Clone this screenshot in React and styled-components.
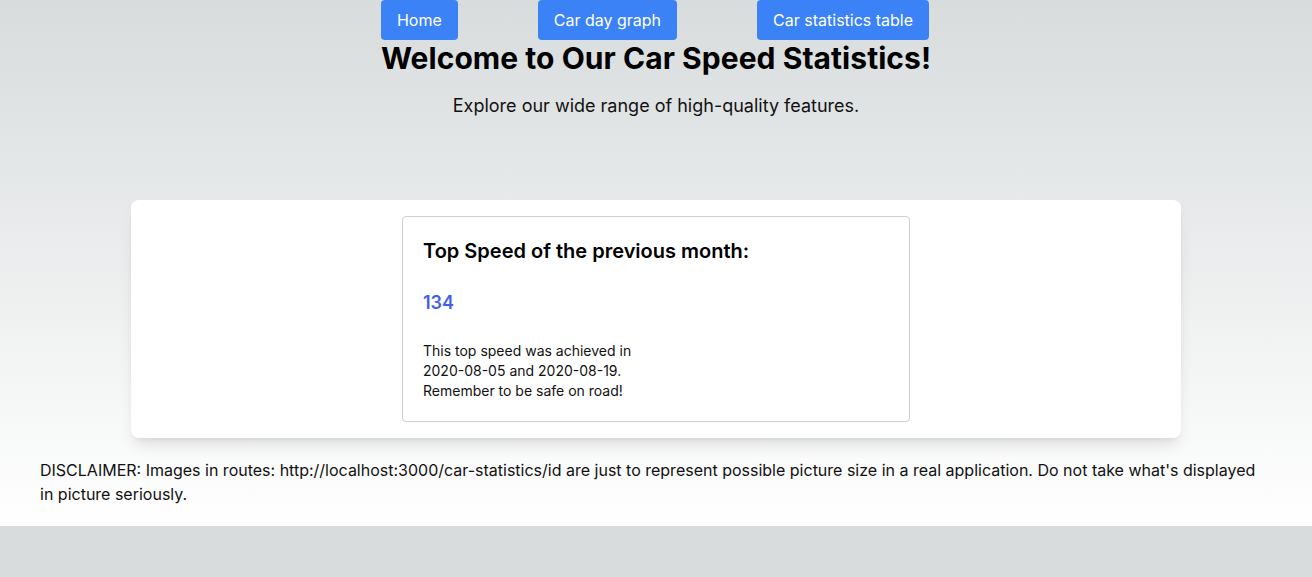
import React from "react";
import styled, { createGlobalStyle } from "styled-components";

const GlobalStyle = createGlobalStyle`
  html, body {
    margin: 0;
    padding: 0;
    background: #d8dcdd;
    font-family: Inter, "Noto Sans", sans-serif;
    color: #111;
  }
  * { box-sizing: border-box; }
`;

const Page = styled.div`
  background: linear-gradient(to bottom, #d8dcdd 0%, #ffffff 100%);
  padding-bottom: 20px;
`;

const Nav = styled.nav`
  display: flex;
  justify-content: center;
  gap: 80px;
  padding-right: 2px;
`;

const NavButton = styled.button`
  background: #3b82f6;
  color: #fff;
  border: none;
  border-radius: 4px;
  padding: 0 16px;
  height: 40px;
  font-family: inherit;
  font-size: 16px;
  line-height: 24px;
  cursor: pointer;
`;

const Hero = styled.header`
  text-align: center;
`;

const Title = styled.h1`
  margin: 0;
  font-size: 30px;
  line-height: 36px;
  font-weight: 700;
  letter-spacing: 0.05px;
  color: #000;
`;

const Subtitle = styled.p`
  margin: 16px 0 0;
  font-size: 18px;
  line-height: 28px;
  color: #111;
`;

const Panel = styled.section`
  margin: 80px 131px 0;
  background: #fff;
  border-radius: 8px;
  padding: 16px 0;
  display: flex;
  justify-content: center;
  box-shadow: 0 10px 15px -3px rgba(0, 0, 0, 0.1), 0 4px 6px -4px rgba(0, 0, 0, 0.1);
`;

const StatCard = styled.div`
  width: 508px;
  border: 1px solid #cfcfcf;
  border-radius: 4px;
  padding: 20px;
`;

const StatTitle = styled.h2`
  margin: 0;
  font-size: 20px;
  line-height: 28px;
  font-weight: 600;
  color: #000;
`;

const StatValue = styled.p`
  margin: 24px 0 0;
  font-size: 18px;
  line-height: 28px;
  font-weight: 600;
  color: #3f5ff0;
`;

const StatNote = styled.p`
  margin: 24px 0 0;
  font-size: 14px;
  line-height: 20px;
  color: #111;
`;

const Disclaimer = styled.p`
  margin: 20px 40px 0;
  font-size: 16px;
  line-height: 24px;
  color: #111;
`;

export default function App() {
  return (
    <>
      <GlobalStyle />
      <Page>
        <Nav>
          <NavButton>Home</NavButton>
          <NavButton>Car day graph</NavButton>
          <NavButton>Car statistics table</NavButton>
        </Nav>
        <Hero>
          <Title>Welcome to Our Car Speed Statistics!</Title>
          <Subtitle>Explore our wide range of high-quality features.</Subtitle>
        </Hero>
        <Panel>
          <StatCard>
            <StatTitle>Top Speed of the previous month:</StatTitle>
            <StatValue>134</StatValue>
            <StatNote>
              This top speed was achieved in
              <br />
              2020-08-05 and 2020-08-19.
              <br />
              Remember to be safe on road!
            </StatNote>
          </StatCard>
        </Panel>
        <Disclaimer>
          DISCLAIMER: Images in routes: http://localhost:3000/car-statistics/id are just to represent possible picture size in a real application. Do not take what's displayed in picture seriously.
        </Disclaimer>
      </Page>
    </>
  );
}
